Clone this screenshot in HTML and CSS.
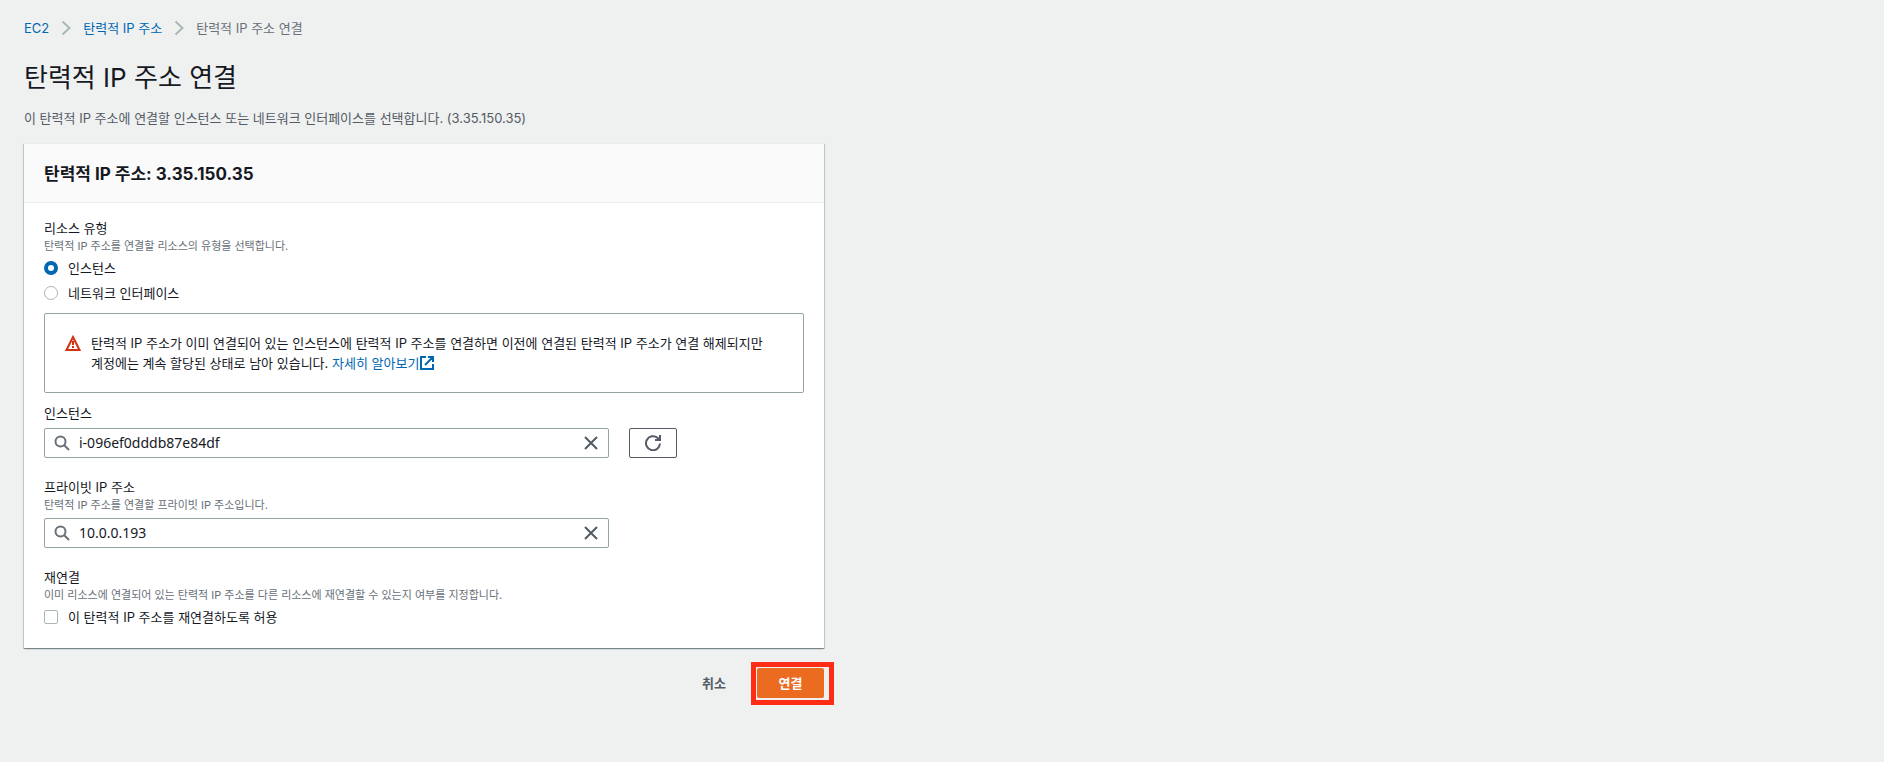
FILE: index.html
```html
<!DOCTYPE html>
<html lang="ko">
<head>
<meta charset="utf-8">
<meta name="viewport" content="width=device-width, initial-scale=1">
<title>탄력적 IP 주소 연결</title>
<link rel="stylesheet" href="styles.css">
</head>
<body>
<main class="page">
  <nav class="breadcrumbs" aria-label="Breadcrumb">
    <a href="#">EC2</a>
    <svg class="chevron" viewBox="0 0 10 16"><path d="M1.5 1.5 8.5 8l-7 6.500"/></svg>
    <a href="#">탄력적 IP 주소</a>
    <svg class="chevron" viewBox="0 0 10 16"><path d="M1.5 1.5 8.5 8l-7 6.500"/></svg>
    <span>탄력적 IP 주소 연결</span>
  </nav>
  <h1 class="title">탄력적 IP 주소 연결</h1>
  <p class="description">이 탄력적 IP 주소에 연결할 인스턴스 또는 네트워크 인터페이스를 선택합니다. (3.35.150.35)</p>

  <form class="form">
    <section class="card">
      <header class="card-header"><h2>탄력적 IP 주소: 3.35.150.35</h2></header>
      <div class="card-body">
        <div class="field" role="radiogroup" aria-labelledby="type-label">
          <div class="label" id="type-label">리소스 유형</div>
          <div class="hint">탄력적 IP 주소를 연결할 리소스의 유형을 선택합니다.</div>
          <div class="options">
            <label class="option"><input type="radio" name="type" checked>인스턴스</label>
            <label class="option"><input type="radio" name="type">네트워크 인터페이스</label>
          </div>
        </div>

        <div class="alert" role="note">
          <svg class="alert-icon" viewBox="0 0 16 16"><path d="M8 2 14.500 15h-13z" fill="none" stroke="#d13212" stroke-width="2"/><path d="M8 6v4M8 11v2" fill="none" stroke="#d13212" stroke-width="2"/></svg>
          <p>탄력적 IP 주소가 이미 연결되어 있는 인스턴스에 탄력적 IP 주소를 연결하면 이전에 연결된 탄력적 IP 주소가 연결 해제되지만 계정에는 계속 할당된 상태로 남아 있습니다. <a href="#">자세히 알아보기<svg class="external" viewBox="0 0 14 14"><path d="M6 1H1v12h12V8M8 1h5v5M13 1 5 9"/></svg></a></p>
        </div>

        <div class="field">
          <label class="label" for="instance">인스턴스</label>
          <div class="control-row">
            <div class="search">
              <svg class="search-icon" viewBox="0 0 16 16"><circle cx="6.500" cy="6.500" r="5"/><path d="m10 10 5 5"/></svg>
              <input id="instance" type="text" value="i-096ef0dddb87e84df">
              <button class="clear" type="button" aria-label="지우기"><svg viewBox="0 0 14 14"><path d="m1 1 12 12M13 1 1 13"/></svg></button>
            </div>
            <button class="refresh" type="button" aria-label="새로 고침"><svg viewBox="0 0 16 16"><path d="M15 8.500A7 7 0 1 1 12.500 2.800L14.500 5"/><path d="M15 0v5h-5"/></svg></button>
          </div>
        </div>

        <div class="field">
          <label class="label" for="private-ip">프라이빗 IP 주소</label>
          <div class="hint">탄력적 IP 주소를 연결할 프라이빗 IP 주소입니다.</div>
          <div class="control-row">
            <div class="search">
              <svg class="search-icon" viewBox="0 0 16 16"><circle cx="6.500" cy="6.500" r="5"/><path d="m10 10 5 5"/></svg>
              <input id="private-ip" type="text" value="10.0.0.193">
              <button class="clear" type="button" aria-label="지우기"><svg viewBox="0 0 14 14"><path d="m1 1 12 12M13 1 1 13"/></svg></button>
            </div>
          </div>
        </div>

        <div class="field">
          <div class="label">재연결</div>
          <div class="hint">이미 리소스에 연결되어 있는 탄력적 IP 주소를 다른 리소스에 재연결할 수 있는지 여부를 지정합니다.</div>
          <div class="options">
            <label class="option"><input type="checkbox">이 탄력적 IP 주소를 재연결하도록 허용</label>
          </div>
        </div>
      </div>
    </section>
    <div class="actions">
      <button class="cancel" type="button">취소</button>
      <div class="highlight"><button class="submit" type="button">연결</button></div>
    </div>
  </form>
</main>
</body>
</html>
```
FILE: styles.css
```css
* { box-sizing: border-box; }

body {
  margin: 0;
  background: #eff1f1;
  color: #16191f;
  font-family: Inter, "Noto Sans CJK KR", sans-serif;
  font-size: 13px;
  line-height: 20px;
  word-break: keep-all;
}

h1, h2, p { margin: 0; }
a { color: #0067b3; text-decoration: none; }
svg { display: block; fill: none; }

button, input { font: inherit; color: inherit; }
button { padding: 0; border: 0; background: none; cursor: pointer; }

.page { padding: 18px 24px 56px; }

.breadcrumbs { display: flex; align-items: center; gap: 12px; color: #687078; }
.chevron { width: 10px; height: 16px; stroke: #aab7b8; stroke-width: 2; }

.title { margin-top: 22px; font-size: 26px; font-weight: 400; line-height: 36px; }
.description { margin-top: 12px; color: #545b64; }

.form { max-width: 800px; margin-top: 15px; }

.card {
  background: #fff;
  box-shadow: 0 1px 1px 0 rgba(0, 28, 36, 0.3), 1px 1px 1px 0 rgba(0, 28, 36, 0.15), -1px 1px 1px 0 rgba(0, 28, 36, 0.15);
}
.card-header {
  padding: 18px 20px 16px;
  background: #fafafa;
  border-top: 1px solid #eaeded;
  border-bottom: 1px solid #eaeded;
}
.card-header h2 { font-size: 17px; font-weight: 700; line-height: 24px; }
.card-body { padding: 15px 20px 21px; }

.field + .field { margin-top: 19px; }
.label { display: block; }
.hint { color: #687078; font-size: 11px; line-height: 16px; }

.options { display: flex; flex-direction: column; align-items: flex-start; gap: 5px; margin-top: 4px; }
.option { display: flex; align-items: center; gap: 10px; }
.option input {
  appearance: none;
  width: 14px;
  height: 14px;
  margin: 0;
  border: 1px solid #aab7b8;
  border-radius: 2px;
  background: #fff;
}
.option input[type="radio"] { border-radius: 50%; }
.option input[type="radio"]:checked { border: 4px solid #0067b3; }

.alert {
  display: flex;
  gap: 10px;
  margin: 10px 0;
  padding: 19px 20px;
  border: 1px solid #95a5a6;
  border-radius: 2px;
}
.alert-icon { flex: none; width: 16px; height: 16px; margin-top: 2px; }
.external {
  display: inline-block;
  width: 14px;
  height: 14px;
  margin-left: 1px;
  stroke: #0067b3;
  stroke-width: 2;
  vertical-align: -2px;
}

.control-row { display: grid; grid-template-columns: repeat(12, minmax(0, 1fr)); gap: 20px; margin-top: 5px; }
.search {
  grid-column: span 9;
  display: flex;
  align-items: center;
  gap: 9px;
  height: 30px;
  padding: 0 10px 0 9px;
  border: 1px solid #95a5a6;
  border-radius: 2px;
}
.search input {
  flex: 1;
  min-width: 0;
  padding: 0;
  border: 0;
  outline: 0;
  background: none;
  font-family: "Noto Sans", "Noto Sans CJK KR", sans-serif;
  font-size: 14px;
}
.search-icon { width: 16px; height: 16px; stroke: #687078; stroke-width: 2; }
.clear svg { width: 14px; height: 14px; stroke: #545b64; stroke-width: 2; }

.refresh {
  display: grid;
  place-items: center;
  width: 48px;
  height: 30px;
  border: 1px solid #545b64;
  border-radius: 2px;
}
.refresh svg { width: 16px; height: 16px; stroke: #545b64; stroke-width: 2; }

.actions { display: flex; justify-content: flex-end; gap: 10px; margin-top: 20px; font-weight: 700; }
.cancel { padding: 0 21px; color: #545b64; }
.submit { width: 67px; height: 30px; border-radius: 2px; background: #eb6c20; color: #fff; }
.highlight { position: relative; }
.highlight::after {
  content: "";
  position: absolute;
  inset: -6px -10px -7px -6px;
  border: 5px solid #ff2d16;
  pointer-events: none;
}
```
